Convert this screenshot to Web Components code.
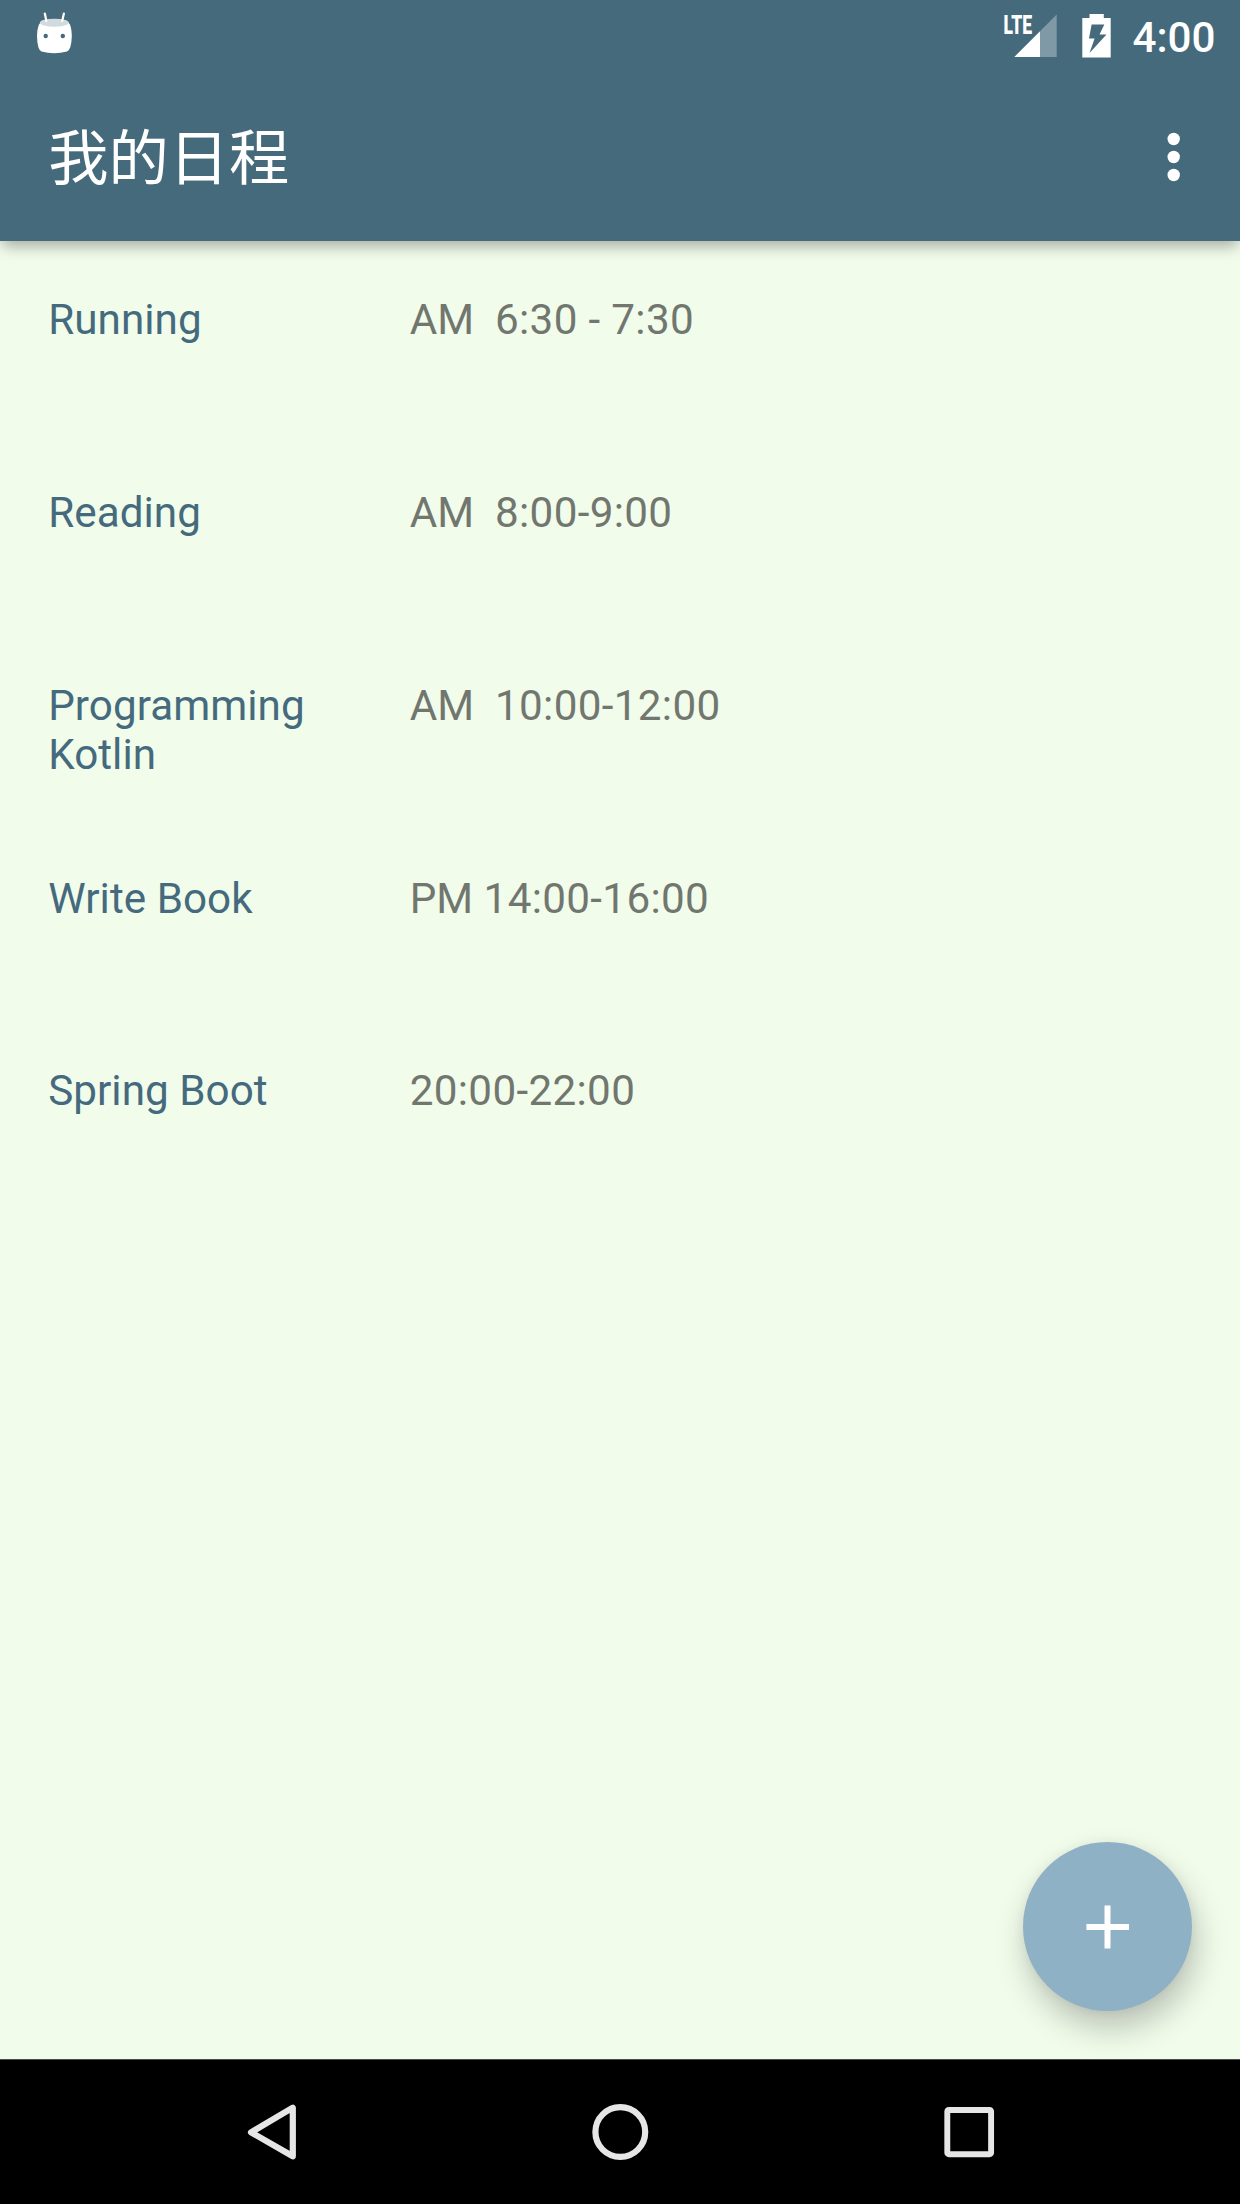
<!DOCTYPE html>
<html lang="zh-CN">
<head>
<meta charset="utf-8">
<title>我的日程</title>
<style>
html,body{margin:0;padding:0}
body{background:#f1fceb;font-family:Roboto,"Noto Sans CJK SC",sans-serif}
</style>
</head>
<body>
<schedule-app></schedule-app>
<script>
const define = (name, html) => {
  const t = document.createElement('template');
  t.innerHTML = html;
  customElements.define(name, class extends HTMLElement {
    constructor() {
      super();
      this.attachShadow({mode: 'open'}).append(t.content.cloneNode(true));
    }
  });
};

define('status-bar', `
<style>
:host{display:flex;height:72px;align-items:flex-start;color:#fff}
svg{display:block;flex:none}
.grow{flex:1}
.clock{font:500 42.2px/49px Roboto,sans-serif;padding:13px 24.5px 0 0;width:107px;box-sizing:border-box;display:flex;justify-content:flex-end}
</style>
<svg width="90" height="72" viewBox="0 0 90 72">
  <path fill="#fff" d="M40.5 22.5Q54 18 68.500 22.500Q71.700 25.500 71.800 36Q71.500 49.500 67 51.500Q54 55 41.500 51.500Q37.200 49.500 37 36Q37.200 25.500 40.500 22.500Z"/>
  <ellipse cx="54.300" cy="22.700" rx="14.400" ry="4" fill="#d1dade"/>
  <path d="M44.800 13.500L46.400 21M63.900 13.500L62.200 21" stroke="#fff" stroke-width="2.200" stroke-linecap="round"/>
  <circle cx="45.700" cy="36" r="2.200" fill="#456a7b"/><circle cx="62.800" cy="36" r="2.200" fill="#456a7b"/>
</svg>
<div class="grow"></div>
<svg width="133" height="72" viewBox="1000 0 133 72">
  <text x="1003.400" y="33.600" textLength="28.600" lengthAdjust="spacingAndGlyphs" font-family="Roboto" font-weight="900" font-size="25.500" fill="#fff">LTE</text>
  <path d="M1040 31.300L1056.700 14.600V57H1040Z" fill="#7f99a6"/>
  <path d="M1014.300 57L1040 31.300V57Z" fill="#fff"/>
  <path fill="#fff" d="M1089.500 14H1103.800V18H1110.700V57.600H1082.300V18H1089.500Z"/>
  <path fill="#456a7b" d="M1091.600 24.600H1104.300L1099.500 34.600H1106.500L1089.500 53L1094.600 38.600H1089Z"/>
</svg>
<div class="clock">4:00</div>
`);

define('app-bar', `
<style>
:host{display:flex;height:169px;align-items:center;padding:0 48.200px;color:#fff;box-sizing:border-box}
h1{margin:0;flex:1;font:400 60.270px/88px "Noto Sans CJK SC",sans-serif;padding-bottom:6px}
svg{display:block}
</style>
<h1><slot></slot></h1>
<svg width="36" height="60" viewBox="0 0 36 60" fill="#fff"><circle cx="17.700" cy="12" r="6.200"/><circle cx="17.700" cy="30" r="6.200"/><circle cx="17.700" cy="48" r="6.200"/></svg>
`);

define('schedule-item', `
<style>
:host{display:flex;height:192.870px;padding:54px 48.200px 0;box-sizing:border-box;font:400 42.200px/49.400px Roboto,sans-serif;flex:none}
.name{width:289.300px;color:#456a7d;flex:none;letter-spacing:.05px}
.time{margin-left:72.200px;color:#71776f;white-space:pre}
.hours{letter-spacing:.34px}
</style>
<div class="name"><slot name="name"></slot></div><div class="time"><slot name="period"></slot><span class="hours"><slot></slot></span></div>
`);

define('add-button', `
<style>
:host{display:flex;width:168.800px;height:168.800px;border-radius:50%;background:#8fb1c5;align-items:center;justify-content:center;
 box-shadow:0 0 12px rgba(0,0,0,.05),4px 17px 32px rgba(0,0,0,.23)}
svg{display:block}
</style>
<svg width="44" height="44" viewBox="0 0 44 44"><path fill="#fff" d="M18.500 .500H24.500V19H43V25H24.500V43.500H18.500V25H.400V19H18.500Z"/></svg>
`);

define('nav-bar', `
<style>
:host{display:flex;height:145px;background:#000;border-top:1px solid #4a4d48;box-sizing:border-box;flex:none}
svg{display:block}
</style>
<svg width="1240" height="144" viewBox="0 2060 1240 144" fill="none" stroke="#e6e6e6">
 <path d="M292.800 2107.700V2156.300L251 2132.300Z" stroke-width="6.200" stroke-linejoin="round"/>
 <circle cx="620.300" cy="2132" r="24.900" stroke-width="6.200"/>
 <rect x="947.300" y="2110" width="43.800" height="44.200" rx="1.500" stroke-width="5.900"/>
</svg>
`);

define('schedule-app', `
<style>
:host{display:flex;flex-direction:column;width:1240px;height:2204px;background:#f1fceb;overflow:hidden}
header{background:#456a7b;box-shadow:0 7px 14px -2px rgba(0,0,0,.32);position:relative;flex:none}
main{flex:1;display:flex;flex-direction:column;overflow:hidden}
.fab{margin-top:auto;padding:0 48px 48px;display:flex;justify-content:flex-end}
</style>
<header><status-bar></status-bar><app-bar>我的日程</app-bar></header>
<main>
<schedule-item><span slot="name">Running</span><span slot="period">AM  </span>6:30 - 7:30</schedule-item>
<schedule-item><span slot="name">Reading</span><span slot="period">AM  </span>8:00-9:00</schedule-item>
<schedule-item><span slot="name">Programming Kotlin</span><span slot="period">AM  </span>10:00-12:00</schedule-item>
<schedule-item><span slot="name">Write Book</span><span slot="period">PM </span>14:00-16:00</schedule-item>
<schedule-item><span slot="name">Spring Boot</span>20:00-22:00</schedule-item>
<div class="fab"><add-button></add-button></div>
</main>
<nav-bar></nav-bar>
`);
</script>
</body>
</html>
